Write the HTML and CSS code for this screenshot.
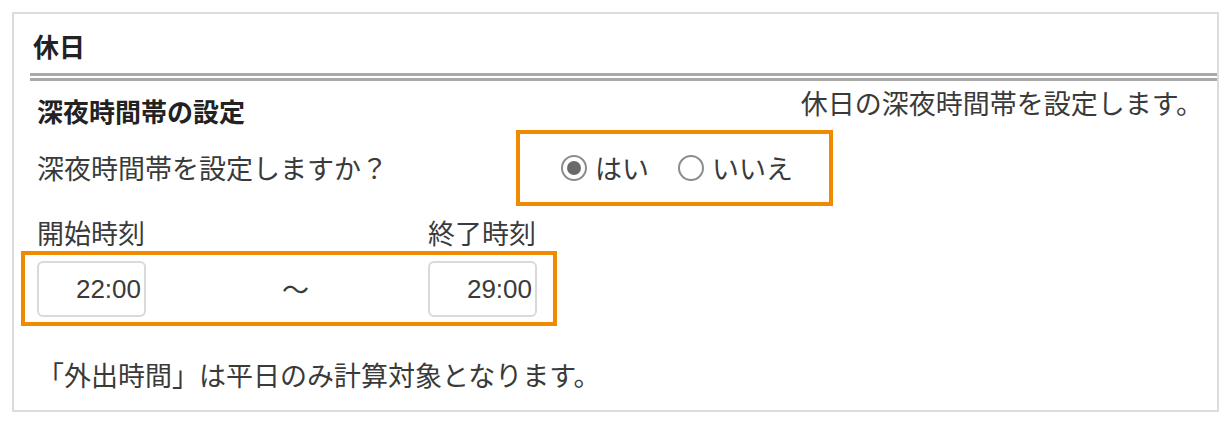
FILE: index.html
```html
<!DOCTYPE html>
<html lang="ja">
<head>
<meta charset="utf-8">
<title>休日</title>
<link rel="stylesheet" href="styles.css">
</head>
<body>
<div class="card">
  <div class="card-head">休日</div>
  <div class="card-body">
    <div class="section-row">
      <div class="section-title">深夜時間帯の設定</div>
      <div class="section-desc">休日の深夜時間帯を設定します。</div>
    </div>
    <div class="question-row">
      <div class="question-label">深夜時間帯を設定しますか？</div>
      <div class="radio-group mark">
        <label class="radio"><span class="radio-circle checked"></span><span class="radio-text">はい</span></label>
        <label class="radio"><span class="radio-circle"></span><span class="radio-text">いいえ</span></label>
      </div>
    </div>
    <div class="time-labels">
      <div class="time-label start">開始時刻</div>
      <div class="time-label end">終了時刻</div>
    </div>
    <div class="time-row mark">
      <div class="time-input">22:00</div>
      <div class="tilde">〜</div>
      <div class="time-input">29:00</div>
    </div>
    <div class="note">「外出時間」は平日のみ計算対象となります。</div>
  </div>
</div>
</body>
</html>
```

FILE: styles.css
```css
* { box-sizing: border-box; }
html, body { margin: 0; padding: 0; background: #fff; }
body {
  font-family: "Noto Sans CJK JP", sans-serif;
  font-size: 27px;
  color: #3a3a3a;
  width: 1231px;
  height: 424px;
  overflow: hidden;
}
.card {
  margin: 12px;
  height: 400px;
  border: 2px solid #dcdcdc;
}
.card-head {
  margin-left: 16px;
  padding: 6px 0 0 3px;
  line-height: 52px;
  height: 67px;
  font-weight: bold;
  font-size: 26px;
  color: #222;
  border-bottom: 8px double #a9a9a9;
}
.card-body {
  padding: 0 14px 0 23px;
}
.section-row {
  display: flex;
  justify-content: space-between;
  align-items: flex-start;
  height: 45px;
}
.section-title {
  font-weight: bold;
  font-size: 26px;
  color: #222;
  line-height: 30px;
  margin-top: 15px;
}
.section-desc {
  line-height: 30px;
  margin-top: 7px;
}
.question-row {
  display: flex;
  align-items: center;
  margin-top: 4px;
}
.question-label {
  width: 479px;
  line-height: 30px;
}
.mark {
  border: 4px solid #f08a00;
}
.radio-group {
  display: flex;
  align-items: center;
  height: 76px;
  width: 317px;
  padding-left: 41px;
}
.radio {
  display: flex;
  align-items: center;
  line-height: 30px;
}
.radio + .radio { margin-left: 29px; }
.radio-circle {
  width: 26px;
  height: 26px;
  border-radius: 50%;
  border: 2px solid #8c8c8c;
  background: #fff;
  display: flex;
  align-items: center;
  justify-content: center;
}
.radio-circle.checked::after {
  content: "";
  width: 14px;
  height: 14px;
  border-radius: 50%;
  background: #6a6a6a;
}
.radio-text {
  margin-left: 8px;
}
.time-labels {
  display: flex;
  margin-top: 6px;
  line-height: 30px;
  height: 39px;
  padding-top: 6px;
}
.time-label.start {
  width: 391px;
}
.time-row {
  display: flex;
  align-items: center;
  margin-left: -16px;
  width: 536px;
  height: 75px;
  padding: 0 16px 0 12px;
}
.time-input {
  width: 109px;
  height: 56px;
  border: 2px solid #d9d9d9;
  border-radius: 6px;
  font-family: "Liberation Sans", Arial, sans-serif;
  font-size: 26px;
  color: #3a3a3a;
  text-align: right;
  line-height: 52px;
  padding-right: 3px;
}
.tilde {
  width: 27px;
  margin: 0 119px 0 136px;
  line-height: 30px;
  text-align: center;
}
.note {
  margin-top: 34px;
  line-height: 30px;
}
```
